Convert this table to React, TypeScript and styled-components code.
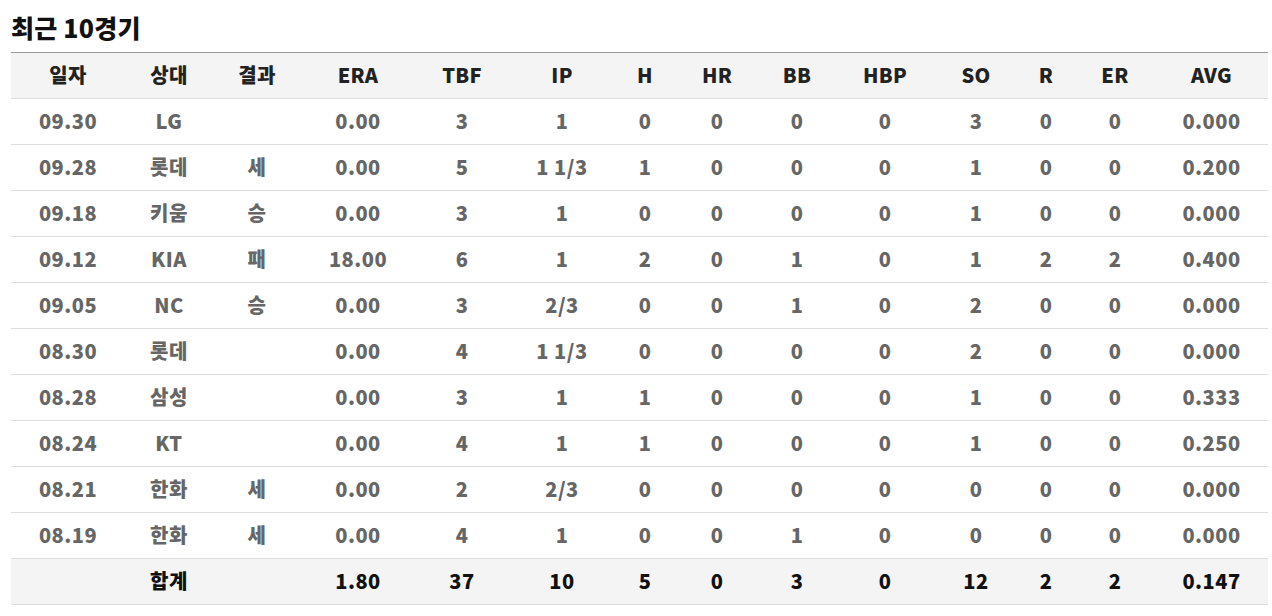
import React from "react";
import styled, { createGlobalStyle } from "styled-components";

const Global = createGlobalStyle`
  html, body { margin: 0; padding: 0; background: #fff; }
  body { font-family: "Noto Sans CJK KR", "Noto Sans", sans-serif; }
`;

const Wrap = styled.div`
  padding: 10px 4px 0 11px;
`;

const Title = styled.h2`
  margin: 0 0 8px;
  font-size: 25px;
  font-weight: 900;
  line-height: 34px;
  color: #111;
  letter-spacing: 0.2px;
`;

const Table = styled.table`
  width: 1257px;
  border-collapse: collapse;
  table-layout: fixed;
  border-top: 1px solid #999;
`;

const Th = styled.th`
  height: 43px;
  padding: 0 0 2px;
  line-height: 20px;
  background: #f4f4f4;
  color: #222;
  font-size: 20px;
  font-weight: 900;
  letter-spacing: 0.3px;
  text-align: center;
  border-bottom: 1px solid #ddd;
`;

const Td = styled.td<{ $total?: boolean }>`
  height: 43px;
  padding: 0 0 2px;
  line-height: 20px;
  text-align: center;
  font-size: 20px;
  font-weight: 900;
  letter-spacing: 0.5px;
  color: ${(p) => (p.$total ? "#111" : "#666")};
  background: ${(p) => (p.$total ? "#f4f4f4" : "#fff")};
  border-bottom: 1px solid #ddd;
`;

const widths = [114, 88, 88, 114, 94, 106, 60, 84, 76, 100, 82, 58, 80, 113];
const headers = ["일자", "상대", "결과", "ERA", "TBF", "IP", "H", "HR", "BB", "HBP", "SO", "R", "ER", "AVG"];

const rows: string[][] = [
  ["09.30", "LG", "", "0.00", "3", "1", "0", "0", "0", "0", "3", "0", "0", "0.000"],
  ["09.28", "롯데", "세", "0.00", "5", "1 1/3", "1", "0", "0", "0", "1", "0", "0", "0.200"],
  ["09.18", "키움", "승", "0.00", "3", "1", "0", "0", "0", "0", "1", "0", "0", "0.000"],
  ["09.12", "KIA", "패", "18.00", "6", "1", "2", "0", "1", "0", "1", "2", "2", "0.400"],
  ["09.05", "NC", "승", "0.00", "3", "2/3", "0", "0", "1", "0", "2", "0", "0", "0.000"],
  ["08.30", "롯데", "", "0.00", "4", "1 1/3", "0", "0", "0", "0", "2", "0", "0", "0.000"],
  ["08.28", "삼성", "", "0.00", "3", "1", "1", "0", "0", "0", "1", "0", "0", "0.333"],
  ["08.24", "KT", "", "0.00", "4", "1", "1", "0", "0", "0", "1", "0", "0", "0.250"],
  ["08.21", "한화", "세", "0.00", "2", "2/3", "0", "0", "0", "0", "0", "0", "0", "0.000"],
  ["08.19", "한화", "세", "0.00", "4", "1", "0", "0", "1", "0", "0", "0", "0", "0.000"],
];

const total = ["", "합계", "", "1.80", "37", "10", "5", "0", "3", "0", "12", "2", "2", "0.147"];

export default function App() {
  return (
    <Wrap>
      <Global />
      <Title>최근 10경기</Title>
      <Table>
        <colgroup>
          {widths.map((w, i) => (
            <col key={i} style={{ width: w }} />
          ))}
        </colgroup>
        <thead>
          <tr>
            {headers.map((h) => (
              <Th key={h}>{h}</Th>
            ))}
          </tr>
        </thead>
        <tbody>
          {rows.map((r, i) => (
            <tr key={i}>
              {r.map((c, j) => (
                <Td key={j}>{c}</Td>
              ))}
            </tr>
          ))}
          <tr>
            {total.map((c, j) => (
              <Td key={j} $total>
                {c}
              </Td>
            ))}
          </tr>
        </tbody>
      </Table>
    </Wrap>
  );
}
